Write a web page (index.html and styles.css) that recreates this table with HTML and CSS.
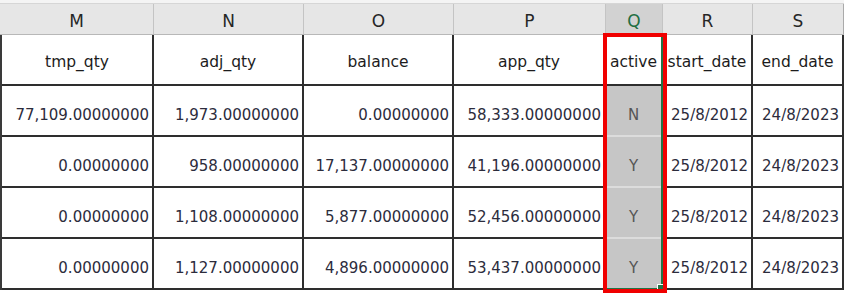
FILE: index.html
```html
<!DOCTYPE html>
<html>
<head>
<meta charset="utf-8">
<link rel="stylesheet" href="styles.css">
</head>
<body>
<div class="sheet">
  <div class="topstrip"></div>
  <div class="colheads">
    <div class="ch">M</div>
    <div class="ch">N</div>
    <div class="ch">O</div>
    <div class="ch">P</div>
    <div class="ch sel">Q</div>
    <div class="ch">R</div>
    <div class="ch last">S</div>
  </div>
  <div class="grid">
    <div class="c hd">tmp_qty</div>
    <div class="c hd">adj_qty</div>
    <div class="c hd">balance</div>
    <div class="c hd">app_qty</div>
    <div class="c hd q">active</div>
    <div class="c hd">start_date</div>
    <div class="c hd">end_date</div>

    <div class="c num">77,109.00000000</div>
    <div class="c num">1,973.00000000</div>
    <div class="c num">0.00000000</div>
    <div class="c num">58,333.00000000</div>
    <div class="c flag">N</div>
    <div class="c num">25/8/2012</div>
    <div class="c num">24/8/2023</div>

    <div class="c num">0.00000000</div>
    <div class="c num">958.00000000</div>
    <div class="c num">17,137.00000000</div>
    <div class="c num">41,196.00000000</div>
    <div class="c flag">Y</div>
    <div class="c num">25/8/2012</div>
    <div class="c num">24/8/2023</div>

    <div class="c num">0.00000000</div>
    <div class="c num">1,108.00000000</div>
    <div class="c num">5,877.00000000</div>
    <div class="c num">52,456.00000000</div>
    <div class="c flag">Y</div>
    <div class="c num">25/8/2012</div>
    <div class="c num">24/8/2023</div>

    <div class="c num">0.00000000</div>
    <div class="c num">1,127.00000000</div>
    <div class="c num">4,896.00000000</div>
    <div class="c num">53,437.00000000</div>
    <div class="c flag">Y</div>
    <div class="c num">25/8/2012</div>
    <div class="c num">24/8/2023</div>
  </div>
  <div class="selection"><span class="handle"></span></div>
  <div class="redbox"></div>
</div>
</body>
</html>
```

FILE: styles.css
```css
html, body {
  margin: 0;
  padding: 0;
  background: #ffffff;
}

.sheet {
  position: relative;
  width: 844px;
  height: 297px;
  background: #ffffff;
  font-family: "DejaVu Sans", Verdana, sans-serif;
  color: #222;
  overflow: hidden;
}

.topstrip {
  height: 3px;
  background: #f4f4f4;
}

.colheads {
  display: grid;
  grid-template-columns: 154px 150px 150px 152px 57px 90px 91px;
  height: 32px;
  background: #e6e6e6;
  border-top: 1px solid #d6d6d6;
  border-bottom: 1px solid #b8b8b8;
  box-sizing: border-box;
}

.ch {
  display: flex;
  align-items: center;
  justify-content: center;
  padding-top: 3px;
  font-size: 17px;
  color: #262626;
  border-right: 1px solid #c4c4c4;
}

.ch.sel {
  background: #d2d2d2;
  color: #1f6e43;
}

.ch.last {
  border-right: 1px solid #aaaaaa;
}

.grid {
  display: grid;
  grid-template-columns: 152px 150px 150px 152px 57px 90px 91px;
  grid-auto-rows: 51px;
  border-left: 2px solid #3a3a3a;
  background: #ffffff;
}

.c {
  box-sizing: border-box;
  border-right: 2px solid #2e2e2e;
  border-bottom: 2px solid #2e2e2e;
  font-size: 15px;
  line-height: 18px;
  white-space: nowrap;
  overflow: hidden;
  display: flex;
}

.hd {
  align-items: center;
  justify-content: center;
  font-size: 15.5px;
  padding-top: 4px;
  color: #1c1c1c;
}

.num {
  align-items: flex-end;
  justify-content: flex-end;
  padding: 0 3px 11px 0;
  color: #2c2c3c;
}

.flag {
  align-items: flex-end;
  justify-content: center;
  padding-bottom: 11px;
  background: #c6c6c6;
  color: #555;
  border-bottom: 2px solid #dcdcdc;
}

.selection {
  position: absolute;
  left: 604px;
  top: 35px;
  width: 59px;
  height: 255px;
  box-sizing: border-box;
  border-right: 2px solid #217346;
  border-bottom: 2px solid #217346;
}

.handle {
  position: absolute;
  right: -4px;
  bottom: -4px;
  width: 6px;
  height: 6px;
  background: #217346;
  border: 1px solid #ffffff;
}

.redbox {
  position: absolute;
  left: 603px;
  top: 33px;
  width: 64px;
  height: 260px;
  box-sizing: border-box;
  border: 4px solid #f00000;
}
```
